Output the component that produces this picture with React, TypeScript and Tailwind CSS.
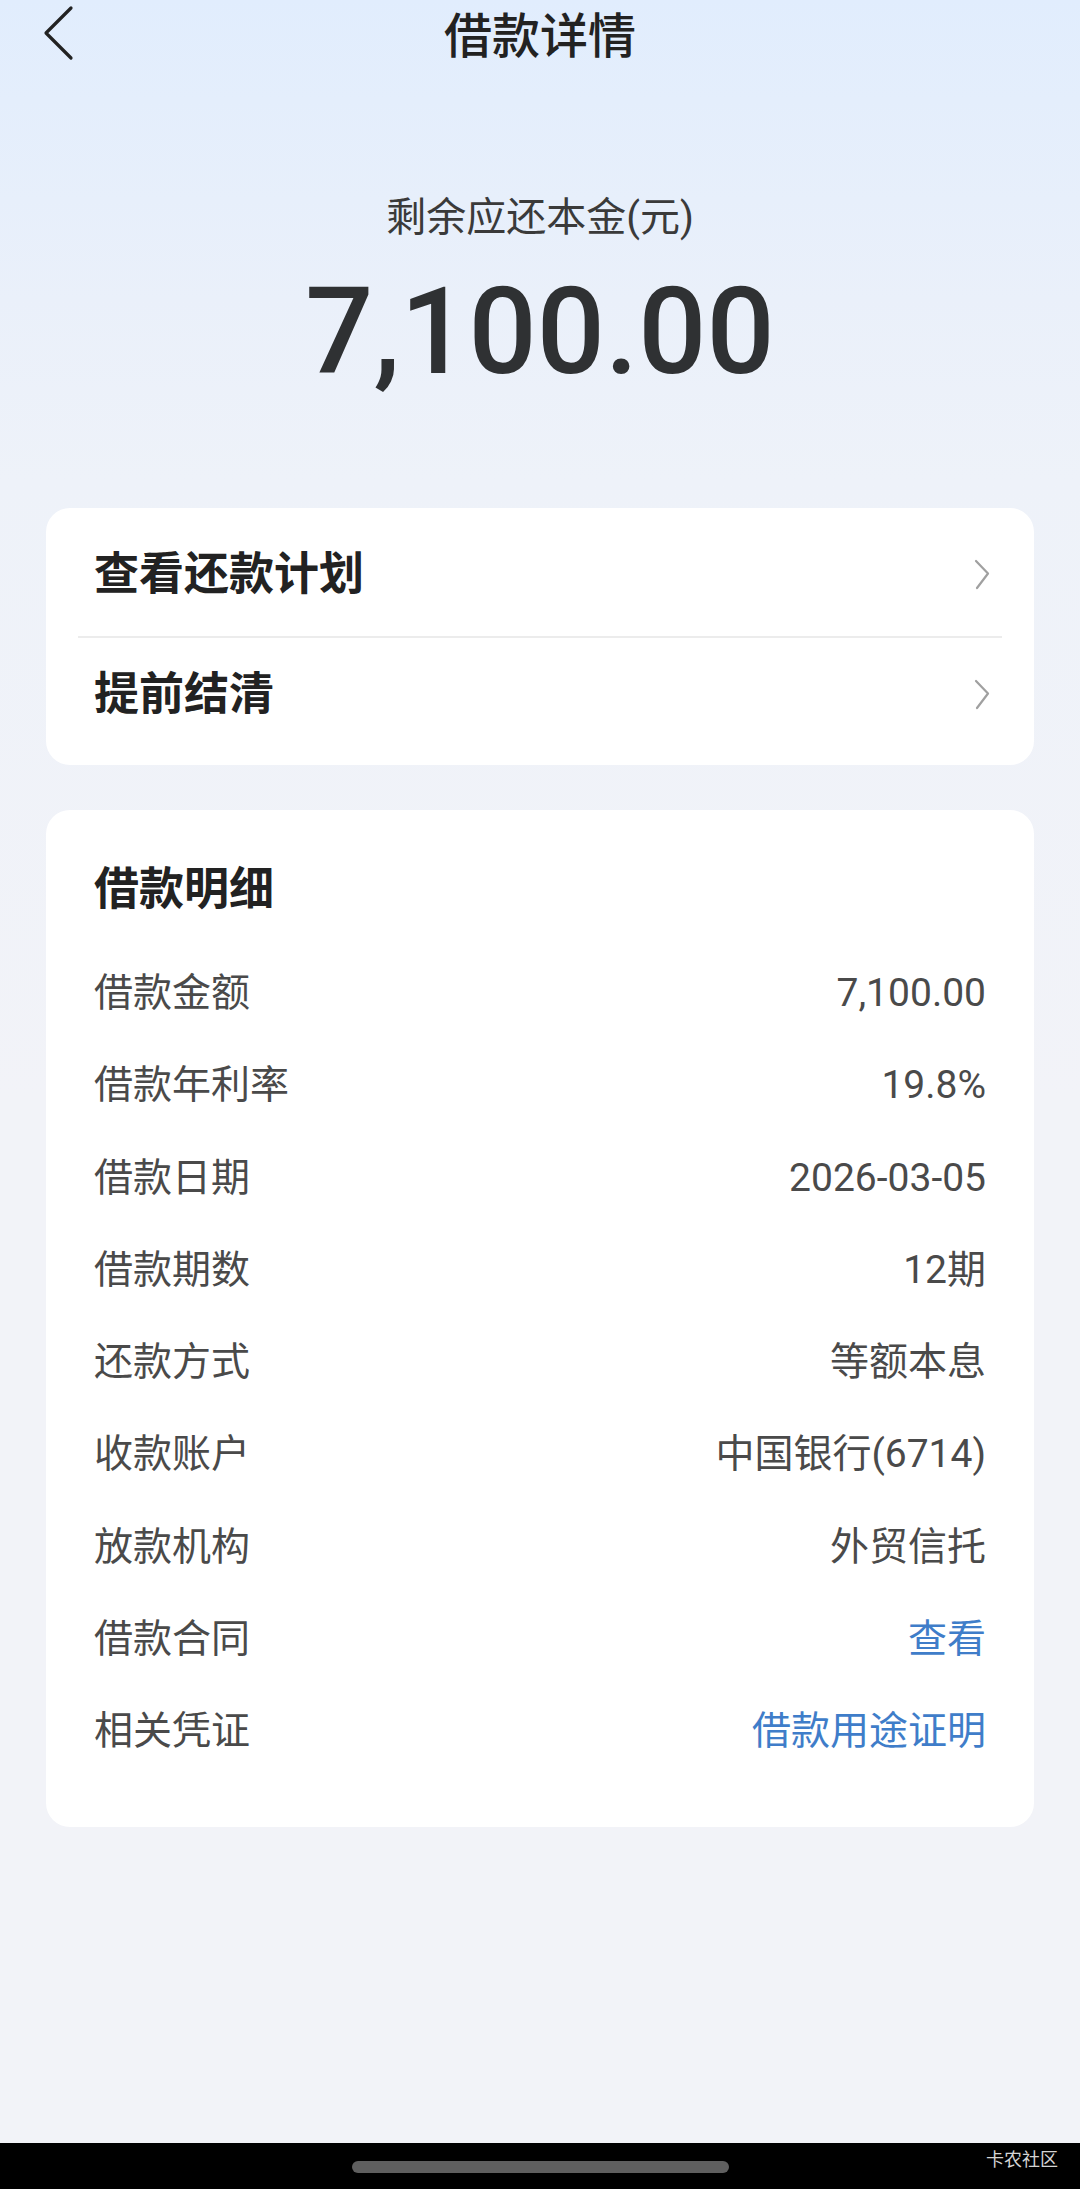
import React from "react";

const FONT = "font-['Roboto','Noto_Sans_CJK_SC',sans-serif]";

function BackIcon() {
  return (
    <svg width="40" height="56" viewBox="0 0 40 56" className="absolute left-[38px] top-[5px]">
      <polyline points="33,3 8,28 33,53" fill="none" stroke="#222" strokeWidth="3.2" strokeLinecap="round" strokeLinejoin="round" />
    </svg>
  );
}

function Chevron() {
  return (
    <svg width="20" height="34" viewBox="0 0 20 34">
      <polyline points="4,3 16,15.5 5,30" fill="none" stroke="#a0a0a0" strokeWidth="2.2" strokeLinecap="round" strokeLinejoin="round" />
    </svg>
  );
}

const details: { label: string; value: string; link?: boolean }[] = [
  { label: "借款金额", value: "7,100.00" },
  { label: "借款年利率", value: "19.8%" },
  { label: "借款日期", value: "2026-03-05" },
  { label: "借款期数", value: "12期" },
  { label: "还款方式", value: "等额本息" },
  { label: "收款账户", value: "中国银行(6714)" },
  { label: "放款机构", value: "外贸信托" },
  { label: "借款合同", value: "查看", link: true },
  { label: "相关凭证", value: "借款用途证明", link: true },
];

export default function App() {
  return (
    <div
      className={`${FONT} w-[1080px] h-[2189px] flex flex-col bg-[linear-gradient(180deg,#e1edfd_0px,#eaf0fa_300px,#eef2f9_480px,#f2f3f8_1100px,#f2f3f8_100%)]`}
    >
      {/* Header */}
      <div className="relative h-[73px] flex items-center justify-center shrink-0">
        <BackIcon />
        <div className="text-[48px] leading-[56px] font-medium text-[#222]">借款详情</div>
      </div>

      {/* Summary */}
      <div className="flex flex-col items-center shrink-0">
        <div className="mt-[121px] text-[40px] leading-[48px] text-[#3a3a3a]">剩余应还本金(元)</div>
        <div className="mt-[25px] text-[120px] leading-[130px] font-medium text-[#2f3133] font-['Roboto',sans-serif]">
          7,100.00
        </div>
      </div>

      {/* Card 1 */}
      <div className="mt-[111px] mx-[46px] bg-white rounded-[24px] flex flex-col shrink-0">
        <div className="h-[128px] flex items-center justify-between pl-[48px] pr-[42px] pt-[6px]">
          <span className="text-[45px] leading-[56px] font-semibold text-[#222]">查看还款计划</span>
          <Chevron />
        </div>
        <div className="mx-[32px] h-[2px] bg-[#ececec]" />
        <div className="h-[127px] flex items-center justify-between pl-[48px] pr-[42px] pb-[14px]">
          <span className="text-[45px] leading-[56px] font-semibold text-[#222]">提前结清</span>
          <Chevron />
        </div>
      </div>

      {/* Card 2 */}
      <div className="mt-[45px] mx-[46px] bg-white rounded-[24px] flex flex-col pt-[52px] pb-[50px] px-[48px] shrink-0">
        <div className="text-[45px] leading-[56px] font-semibold text-[#222] mb-[29px]">借款明细</div>
        {details.map((d) => (
          <div key={d.label} className="h-[92.25px] flex items-center justify-between">
            <span className="text-[39px] leading-[48px] text-[#4a4a4a]">{d.label}</span>
            <span
              className={`text-[39px] leading-[48px] ${d.link ? "text-[#3f7dc9]" : "text-[#4a4a4a]"}`}
            >
              {d.value}
            </span>
          </div>
        ))}
      </div>

      <div className="flex-1" />

      {/* Bottom system bar */}
      <div className="relative h-[46px] bg-black shrink-0 flex justify-center">
        <div className="mt-[18px] w-[377px] h-[12px] rounded-full bg-[#5f5f5f]" />
        <span className="absolute right-[22px] top-[5px] text-[18px] leading-[24px] text-[#d4d4d4]">卡农社区</span>
      </div>
    </div>
  );
}
